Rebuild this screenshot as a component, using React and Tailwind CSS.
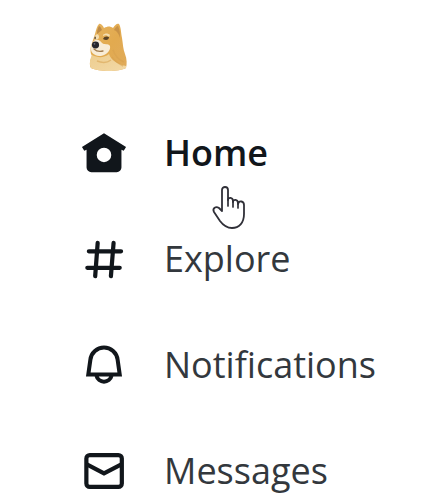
const DogeLogo = () => (
  <svg viewBox="0 0 40 50" className="w-10 h-[50px]" aria-hidden="true">
    <defs>
      <linearGradient id="fur" x1="0" y1="0" x2="1" y2="1">
        <stop offset="0" stopColor="#e6b460" />
        <stop offset="0.5" stopColor="#e2aa4f" />
        <stop offset="1" stopColor="#e0ab5c" />
      </linearGradient>
      <linearGradient id="chest" x1="0" y1="0" x2="1" y2="1">
        <stop offset="0" stopColor="#edcd8f" />
        <stop offset="1" stopColor="#f3d9a6" />
      </linearGradient>
    </defs>
    {/* head and body */}
    <path
      d="M10 2 C12 1 14 4 15 6 C19 4 21 4 24 6 C26 3 28 1 30 2 C32 5 32 11 33 16 C34 22 34 27 36 32 C38 37 38 42 37 46 C30 50 10 50 2 46 C0 43 1 38 3 34 C1 31 1 26 3 21 C4 18 5 15 6 12 C7 8 8 4 10 2 Z"
      fill="url(#fur)"
    />
    {/* ears */}
    <path d="M10 4 C12 5 12 6 13 8 L8 12 C8 8 9 6 10 4 Z" fill="#bd8a47" />
    <path d="M29 4 C31 8 31 12 31 16 C30 12 28 9 25 8 C26 6 28 4 29 4 Z" fill="#c89247" />
    {/* face and chest */}
    <path d="M6 14 C8 11 10 12 10 15 C10 18 6 18 5 17 Z" fill="#f4dfb4" />
    <path
      d="M4 20 C7 16 11 18 13 21 C15 23 19 21 21 24 C22 29 17 33 12 34 C7 34 3 32 2 28 C2 25 2 23 4 20 Z"
      fill="#f8ecd6"
    />
    <path d="M14 13 C16 11 19 11 21 13 L20 15 C18 13 16 13 14 14 Z" fill="#f5deb0" />
    <path d="M3 33 C9 36 15 36 20 32 C22 38 28 42 37 44 L37 46 C30 50 10 50 2 46 C0 42 1 37 3 33 Z" fill="url(#chest)" />
    <path
      d="M8 39 C13 41 18 41 22 38 M24 28 C26 34 30 38 35 40 M23 35 C26 40 30 42 34 44"
      fill="none"
      stroke="#d7a04f"
      strokeWidth="1.4"
      opacity="0.55"
    />
    {/* eyes, nose, mouth */}
    <path d="M14 17 C15 14 18 14 20 15 C20 18 17 19 14 17 Z" fill="#5b4427" />
    <path d="M5 16 C6 14 7 14 7 16 C7 17 6 18 5 16 Z" fill="#6d573a" />
    <ellipse cx="6.5" cy="23" rx="3.6" ry="3.4" fill="#26262d" />
    <circle cx="5.5" cy="21.8" r="0.9" fill="#6c6d7a" />
    <path d="M5 27 C7 29 10 30 14 29" fill="none" stroke="#a07a4c" strokeWidth="1.3" strokeLinecap="round" />
  </svg>
);

const HomeIcon = () => (
  <path
    fill="currentColor"
    fillRule="evenodd"
    d="M12 1.7 L.5 8.9 L1.7 10.8 L2.9 10.3 V19.5 A2.5 2.5 0 0 0 5.4 22 H18.6 A2.5 2.5 0 0 0 21.1 19.5 V10.3 L22.3 10.8 L23.5 8.9 Z M12 9.2 a3.8 3.8 0 1 1 0 7.6 a3.8 3.8 0 1 1 0-7.6 Z"
  />
);

const ExploreIcon = () => (
  <path
    fill="none"
    stroke="currentColor"
    strokeWidth="2.2"
    strokeLinecap="round"
    d="M4.1 8 H20.9 M3.3 16.6 H20.2 M8.7 3.6 L7.4 21 M17 3.6 L15.6 21"
  />
);

const NotificationsIcon = () => (
  <g fill="none" stroke="currentColor" strokeWidth="2.1">
    <path d="M3.8 17 L4.9 9.2 A7.15 7.15 0 0 1 19.1 9.2 L20.2 17 Z" />
    <path d="M8.1 17.6 A4 4 0 0 0 15.9 17.6" />
  </g>
);

const MessagesIcon = () => (
  <g fill="none" stroke="currentColor" strokeWidth="2.2">
    <rect x="2.8" y="3.7" width="18.5" height="16.6" rx="1.8" />
    <path d="M2.8 8.4 L12 13.2 L21.3 8.4" />
  </g>
);

const navItems = [
  { label: "Home", href: "#home", icon: HomeIcon, active: true },
  { label: "Explore", href: "#explore", icon: ExploreIcon },
  { label: "Notifications", href: "#notifications", icon: NotificationsIcon },
  { label: "Messages", href: "#messages", icon: MessagesIcon },
];

const HandCursor = () => (
  <svg
    viewBox="0 0 36 46"
    className="absolute left-[130px] top-[54px] w-9 h-[46px] pointer-events-none"
    aria-hidden="true"
  >
    <path
      d="M11 26 V5 C11 1 17 1 17 5 V15 C17 12 22 12 22 16 V17 C22 14 27 14 27 18 V19 C28 15 33 16 33 20 V29 C33 38 28 43 21 43 C15 43 12 40 9 36 L3 27 C1 23 5 21 8 23 Z"
      fill="#fff"
      stroke="#303038"
      strokeWidth="1.8"
      strokeLinejoin="round"
    />
    <path d="M17 14 V21 M22 16 V22 M27 18 V23" stroke="#303038" strokeWidth="1.7" strokeLinecap="round" />
  </svg>
);

const App = () => {
  return (
    <div className="bg-white px-[81px] pt-[22px] text-[#11161b] font-['Open_Sans',sans-serif]">
      <a href="#home" aria-label="Home page" className="block w-fit ml-2">
        <DogeLogo />
      </a>

      <nav className="mt-[59px] flex flex-col gap-[62px]">
        {navItems.map(({ label, href, icon: Icon, active }) => (
          <div key={label} className="relative">
            <a href={href} className="flex items-center gap-[37px] h-11">
              <svg viewBox="0 0 24 24" className="w-[46px] h-[46px] shrink-0" aria-hidden="true">
                <Icon />
              </svg>
              <span
                className={`text-[36px] leading-[44px] whitespace-nowrap ${
                  active ? "font-semibold" : "font-normal text-[#33383d]"
                }`}
              >
                {label}
              </span>
            </a>
            {active && <HandCursor />}
          </div>
        ))}
      </nav>
    </div>
  );
};

export default App;
